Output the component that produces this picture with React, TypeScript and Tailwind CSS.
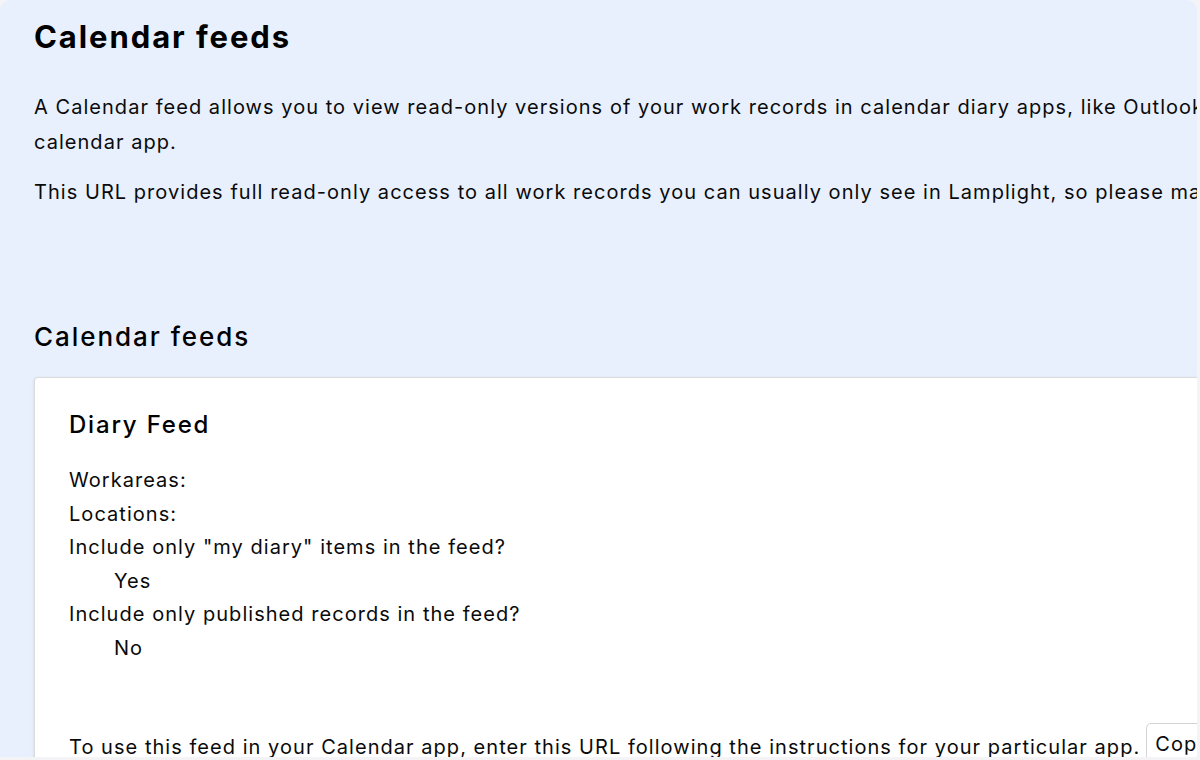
export default function App() {
  const font = { fontFamily: "Inter, 'Noto Sans', sans-serif" };
  return (
    <div
      className="h-[760px] w-[1200px] overflow-hidden bg-[#f4f4f6] pr-[3px] pb-[3px] text-[#0a0a0a]"
      style={font}
    >
      <div className="h-full overflow-hidden rounded-t-[10px] bg-[#e8f0fe] pl-[34px] pt-[18px]">
        <div className="w-[1600px]">
          {/* Page heading and intro */}
          <h1 className="text-[31px] font-bold leading-[37px] tracking-[0.062em] text-black">Calendar feeds</h1>
          <p className="mt-[35px] whitespace-nowrap text-[20px] leading-[35px] tracking-[0.052em]">
            A Calendar feed allows you to view read-only versions of your work records in calendar diary apps, like Outlook or
            <br />
            calendar app.
          </p>
          <p className="mt-[15px] whitespace-nowrap text-[20px] leading-[35px] tracking-[0.052em]">
            This URL provides full read-only access to all work records you can usually only see in Lamplight, so please make sure
          </p>

          {/* Feeds list */}
          <h2 className="mt-[111px] text-[26px] font-medium leading-[32px] tracking-[0.075em] text-black">Calendar feeds</h2>
          <div className="mt-[24px] rounded-[4px] border border-[#dcdcdc] bg-white pl-[34px] pt-[32px] pb-10 shadow-[0_1px_3px_rgba(0,0,0,0.12)]">
            <h3 className="text-[24px] font-medium leading-[30px] tracking-[0.075em] text-black">Diary Feed</h3>
            <div className="mt-[24px] text-[20px] leading-[33.6px] tracking-[0.052em]">
              <div>Workareas:</div>
              <div>Locations:</div>
              <div>Include only "my diary" items in the feed?</div>
              <div className="pl-[45px]">Yes</div>
              <div>Include only published records in the feed?</div>
              <div className="pl-[45px]">No</div>
            </div>
            <div className="mt-[64px] flex items-start whitespace-nowrap text-[20px] leading-[34px] tracking-[0.052em]">
              <span>
                To use this feed in your Calendar app, enter this URL following the instructions for your particular app.
              </span>
              <button className="ml-[6px] -mt-[7px] rounded-[5px] border border-[#d4d4d4] bg-white px-[8px] py-[3px] text-[20px] leading-[34px]">
                Copy URL
              </button>
            </div>
          </div>
        </div>
      </div>
    </div>
  );
}
